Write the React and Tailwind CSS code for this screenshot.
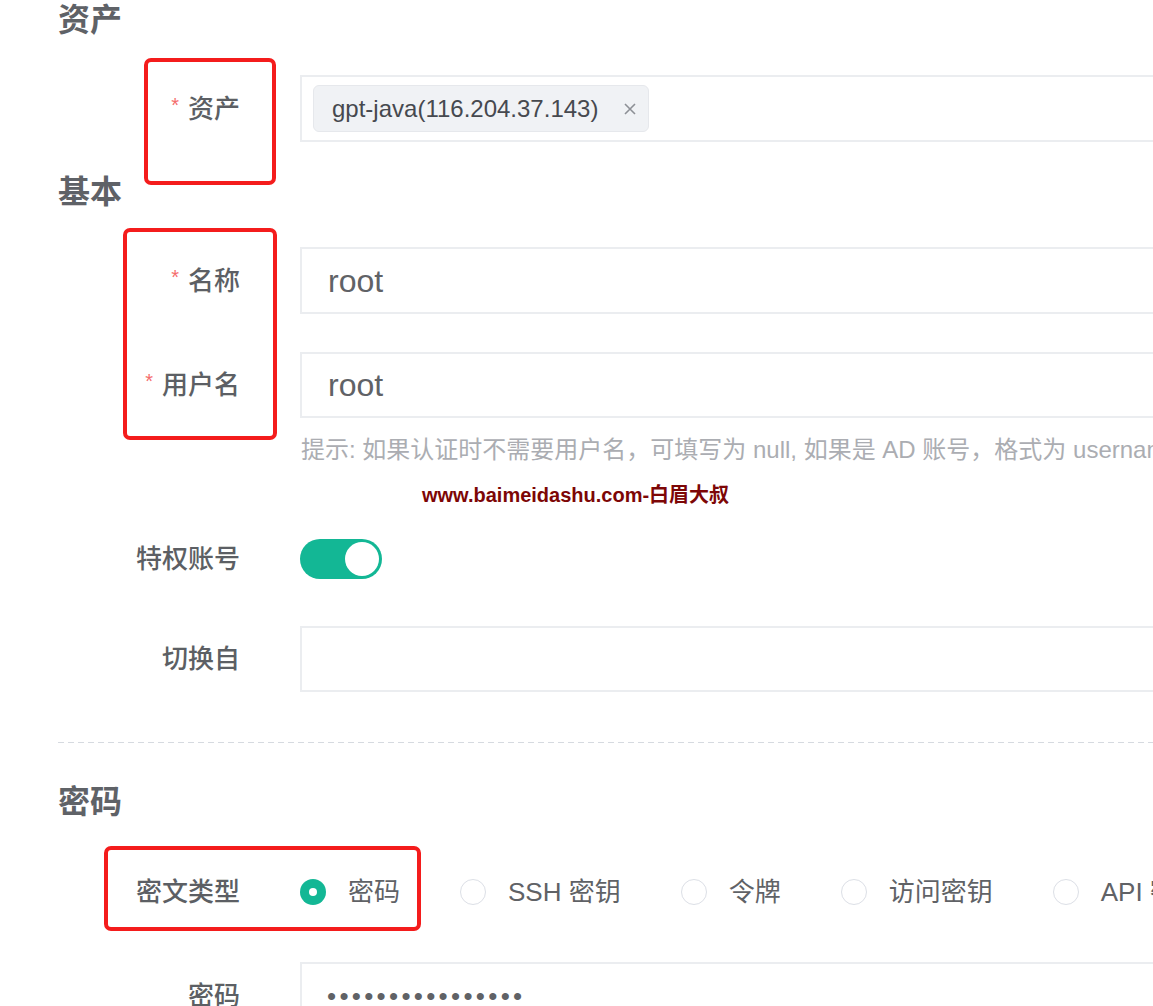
import React from "react";

const GREEN = "bg-[#13b795]";

function Label({ required, children }) {
  return (
    <div className="w-[240px] shrink-0 flex items-center justify-end text-[26px] leading-none font-medium text-[#5c5f64]">
      {required && (
        <span className="text-[#f56c6c] text-[20px] mr-[9px] mb-[8px]">*</span>
      )}
      {children}
    </div>
  );
}

function Heading({ children, className = "" }) {
  return (
    <div
      className={
        "h-[40px] flex items-center pl-[58px] text-[32px] leading-none font-bold text-[#5f6267] " +
        className
      }
    >
      {children}
    </div>
  );
}

function TextBox({ children }) {
  return (
    <div className="ml-[60px] flex-1 h-full border-2 border-[#ebedf0] flex items-center pl-[26px] text-[32px] text-[#606266]">
      {children}
    </div>
  );
}

function Radio({ checked, label }) {
  return (
    <div className="flex items-center mr-[60px] shrink-0">
      {checked ? (
        <span className={"w-[26px] h-[26px] rounded-full flex items-center justify-center " + GREEN}>
          <span className="w-[8px] h-[8px] rounded-full bg-white" />
        </span>
      ) : (
        <span className="w-[26px] h-[26px] rounded-full border-[1.5px] border-[#dcdfe6] bg-white" />
      )}
      <span className="ml-[22px] text-[26px] leading-none text-[#606266] whitespace-nowrap">
        {label}
      </span>
    </div>
  );
}

function RedBox({ className }) {
  return (
    <div
      className={
        "absolute border-[4px] border-[#f41c1c] rounded-[7px] pointer-events-none " + className
      }
    />
  );
}

export default function App() {
  return (
    <div className="w-[1153px] h-[1006px] overflow-hidden bg-white relative font-['Liberation_Sans','Noto_Sans_CJK_SC',sans-serif]">
      <div className="w-[1300px]">
        <Heading>资产</Heading>

        <div className="flex items-center h-[67px] mt-[35px]">
          <Label required>资产</Label>
          <div className="ml-[60px] flex-1 h-full border-2 border-[#ebedf0] flex items-center pl-[11px]">
            <div className="h-[47px] flex items-center gap-[25px] pl-[18px] pr-[11px] rounded-[6px] bg-[#f0f2f5] border border-[#e6e8ec]">
              <span className="text-[24px] text-[#46494f] whitespace-nowrap">
                gpt-java(116.204.37.143)
              </span>
              <svg width="14" height="14" viewBox="0 0 14 14" className="text-[#8d9096]">
                <path d="M2 2L12 12M12 2L2 12" stroke="currentColor" strokeWidth="1.6" />
              </svg>
            </div>
          </div>
        </div>

        <Heading className="mt-[30px]">基本</Heading>

        <div className="flex items-center h-[67px] mt-[35px]">
          <Label required>名称</Label>
          <TextBox>root</TextBox>
        </div>

        <div className="flex items-center h-[66px] mt-[38px]">
          <Label required>用户名</Label>
          <TextBox>root</TextBox>
        </div>

        <div className="flex items-center h-[30px] mt-[17px]">
          <div className="w-[240px] shrink-0" />
          <div className="ml-[61px] text-[24px] text-[#abadb2] whitespace-nowrap">
            提示: 如果认证时不需要用户名，可填写为 null, 如果是 AD 账号，格式为 username@domain
          </div>
        </div>

        <div className="flex items-center h-[40px] mt-[74px]">
          <Label>特权账号</Label>
          <div className={"ml-[60px] w-[82px] h-[40px] rounded-full p-[3px] flex justify-end " + GREEN}>
            <div className="w-[34px] h-[34px] rounded-full bg-white" />
          </div>
        </div>

        <div className="flex items-center h-[66px] mt-[47px]">
          <Label>切换自</Label>
          <TextBox />
        </div>

        <div className="ml-[58px] mt-[50px] h-px bg-[linear-gradient(to_right,#d6dae0_60%,transparent_0)] bg-[length:10px_1px]" />

        <Heading className="mt-[39px]">密码</Heading>

        <div className="flex items-center h-[40px] mt-[50px]">
          <Label>密文类型</Label>
          <div className="ml-[60px] flex items-center">
            <Radio checked label="密码" />
            <Radio label="SSH 密钥" />
            <Radio label="令牌" />
            <Radio label="访问密钥" />
            <Radio label="API 密钥" />
          </div>
        </div>

        <div className="flex items-center h-[67px] mt-[50px]">
          <Label>密码</Label>
          <div className="ml-[60px] flex-1 h-full border-2 border-[#ebedf0] flex items-center pl-[25px]">
            <span className="text-[26px] tracking-[3.3px] text-[#606266] leading-none">
              ••••••••••••••••
            </span>
          </div>
        </div>
      </div>

      <div className="absolute left-[422px] top-[483px] text-[20px] leading-[24px] font-bold text-[#7d0606] whitespace-nowrap">
        www.baimeidashu.com-白眉大叔
      </div>

      <RedBox className="left-[144px] top-[58px] w-[132px] h-[127px]" />
      <RedBox className="left-[123px] top-[228px] w-[154px] h-[212px]" />
      <RedBox className="left-[104px] top-[846px] w-[317px] h-[85px]" />
    </div>
  );
}
